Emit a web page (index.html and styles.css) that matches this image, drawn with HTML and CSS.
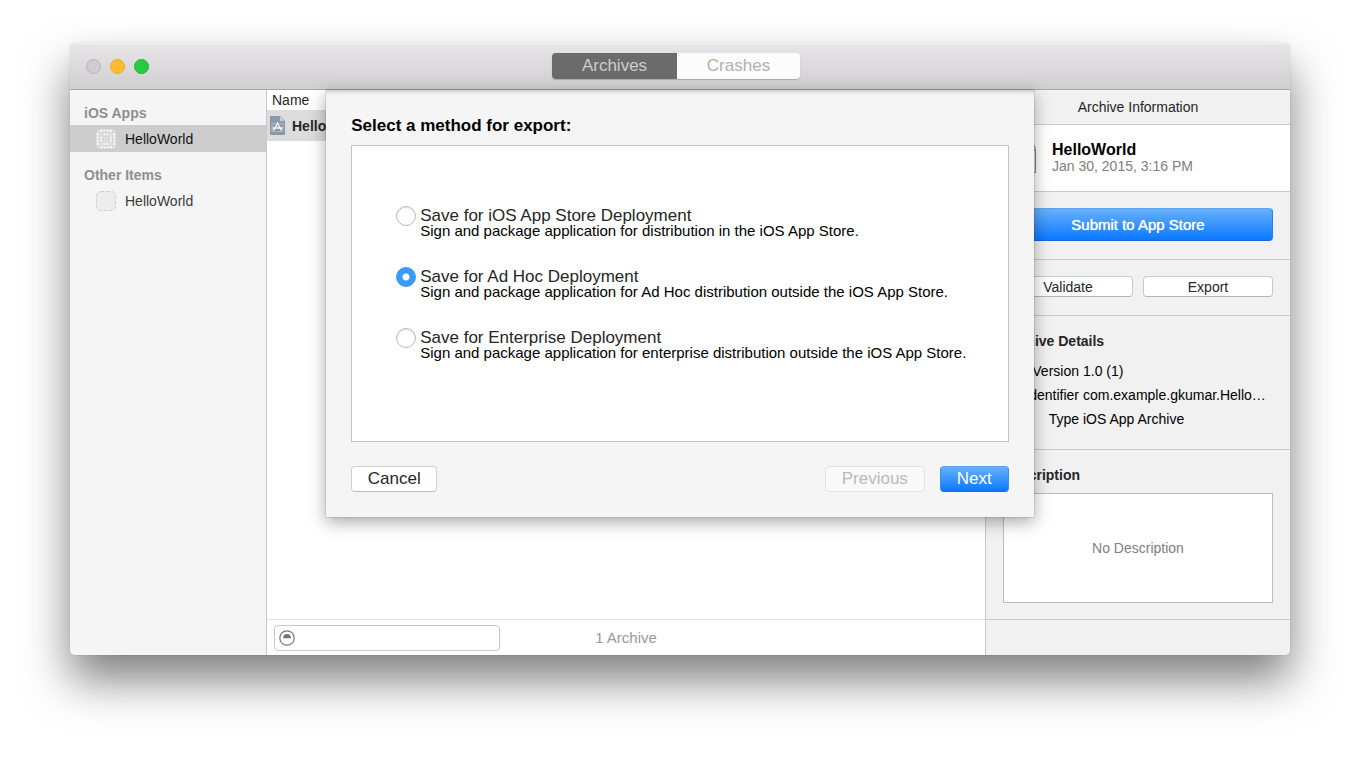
FILE: index.html
```html
<!DOCTYPE html>
<html lang="en">
<head>
<meta charset="utf-8">
<title>Archives</title>
<link rel="stylesheet" href="styles.css">
</head>
<body>
<div class="window">
  <header class="titlebar">
    <div class="lights">
      <button class="light light-close" aria-label="Close"></button>
      <button class="light light-minimize" aria-label="Minimize"></button>
      <button class="light light-zoom" aria-label="Zoom"></button>
    </div>
    <div class="segments">
      <button class="segment segment-active">Archives</button>
      <button class="segment">Crashes</button>
    </div>
  </header>

  <div class="content">
    <nav class="sidebar">
      <h2 class="group-title">iOS Apps</h2>
      <a class="app app-selected" href="#ios">
        <svg class="app-icon" viewBox="0 0 20 20" aria-hidden="true">
          <rect x="0.5" y="0.5" width="19" height="19" rx="4" fill="#f4f4f4" stroke="#e2e2e2"/>
          <g fill="none" stroke="#cacaca" stroke-width="0.6">
            <path d="M3.5 0v20M7 0v20M13 0v20M16.500 0v20M0 3.500h20M0 7h20M0 13h20M0 16.500h20M10 0v20M0 10h20M1 1l18 18M19 1L1 19"/>
            <circle cx="10" cy="10" r="3"/><circle cx="10" cy="10" r="7"/>
          </g>
        </svg>
        <span>HelloWorld</span>
      </a>
      <h2 class="group-title">Other Items</h2>
      <a class="app" href="#other">
        <svg class="app-icon" viewBox="0 0 20 20" aria-hidden="true">
          <rect x="0.5" y="0.5" width="19" height="19" rx="4" fill="#ededed" stroke="#d0d0d0" stroke-dasharray="4 1.5"/>
        </svg>
        <span>HelloWorld</span>
      </a>
    </nav>

    <main class="archives">
      <table class="archive-table">
        <thead><tr><th scope="col">Name</th></tr></thead>
        <tbody>
          <tr>
            <td>
              <div class="archive-name">
                <svg class="archive-icon" viewBox="0 0 15 19" aria-hidden="true">
                  <path d="M.5.5h9.500l4.500 4.500v13.500H.5z" fill="#8c9bab" stroke="#8797a6"/>
                  <path d="M10 .5V5h4.500z" fill="#d7dee5" stroke="#a4b0bb" stroke-width=".6"/>
                  <path d="M2 7.500h11v8H2z" fill="none" stroke="#b8c3cd" stroke-width=".7"/>
                  <path d="M3.500 14.500L8 6.500M7 6.500l4.500 8M2.500 12h10" fill="none" stroke="#f4f6f8" stroke-width="1.400"/>
                </svg>
                <span>HelloWorld</span>
              </div>
            </td>
          </tr>
        </tbody>
      </table>
      <footer class="archives-footer">
        <div class="filter">
          <svg class="filter-icon" viewBox="0 0 16 16" aria-hidden="true">
            <circle cx="8" cy="8" r="7.200" fill="#fff" stroke="#757575" stroke-width="1.200"/>
            <path d="M4 8.300C4 5.500 5.600 4 8 4s4 1.500 4 4.300z" fill="#757575"/>
          </svg>
          <input class="filter-input" type="text" aria-label="Filter archives">
        </div>
        <span class="count">1 Archive</span>
      </footer>
    </main>

    <aside class="inspector">
      <h2 class="inspector-title">Archive Information</h2>
      <section class="summary">
        <svg class="summary-icon" viewBox="0 0 33 36" aria-hidden="true">
          <path d="M.5.5h22q10 1 10 11v21H.5z" fill="#eef1f4" stroke="#75818c"/>
          <path d="M22.500.5v10h10" fill="none" stroke="#75818c"/>
        </svg>
        <div>
          <h3 class="summary-name">HelloWorld</h3>
          <p class="summary-date">Jan 30, 2015, 3:16 PM</p>
        </div>
      </section>
      <section class="submit-section">
        <button class="submit">Submit to App Store</button>
      </section>
      <section class="actions">
        <button class="action">Validate</button>
        <button class="action">Export</button>
      </section>
      <section class="details">
        <h3 class="section-title">Archive Details</h3>
        <dl class="facts">
          <dt>Version</dt><dd>1.0 (1)</dd>
          <dt>Identifier</dt><dd>com.example.gkumar.Hello…</dd>
          <dt>Type</dt><dd>iOS App Archive</dd>
        </dl>
      </section>
      <section class="description">
        <h3 class="section-title"><label for="description">Description</label></h3>
        <textarea class="description-box" id="description" placeholder="No Description"></textarea>
      </section>
      <div class="inspector-footer"></div>
    </aside>

    <form class="sheet" role="dialog" aria-labelledby="sheet-title">
      <h1 class="sheet-title" id="sheet-title">Select a method for export:</h1>
      <div class="options">
        <div class="option">
          <label class="option-label"><input class="radio" type="radio" name="method"><span>Save for iOS App Store Deployment</span></label>
          <p class="option-note">Sign and package application for distribution in the iOS App Store.</p>
        </div>
        <div class="option">
          <label class="option-label"><input class="radio" type="radio" name="method" checked><span>Save for Ad Hoc Deployment</span></label>
          <p class="option-note">Sign and package application for Ad Hoc distribution outside the iOS App Store.</p>
        </div>
        <div class="option">
          <label class="option-label"><input class="radio" type="radio" name="method"><span>Save for Enterprise Deployment</span></label>
          <p class="option-note">Sign and package application for enterprise distribution outside the iOS App Store.</p>
        </div>
      </div>
      <div class="sheet-buttons">
        <button class="sheet-button cancel" type="button">Cancel</button>
        <button class="sheet-button previous" type="button" disabled>Previous</button>
        <button class="sheet-button next" type="button">Next</button>
      </div>
    </form>
  </div>
</div>
</body>
</html>
```
FILE: styles.css
```css
* { box-sizing: border-box; }
body {
  margin: 0;
  min-height: 100vh;
  padding: 43px 70px 102px;
  display: flex;
  background: #fff;
  color: #262626;
  font: 14px/18px "Liberation Sans", Arial, sans-serif;
}
h1, h2, h3, p, dl, dd { margin: 0; }
button, input, textarea { font: inherit; color: inherit; margin: 0; }

.window {
  flex: 1;
  min-width: 0;
  display: flex;
  flex-direction: column;
  border-radius: 5px;
  overflow: clip;
  background: #fff;
  box-shadow: 0 0 1px rgba(0, 0, 0, .4), 0 25px 46px rgba(0, 0, 0, .5);
}

.titlebar {
  height: 47px;
  flex: none;
  display: grid;
  grid-template-columns: 1fr auto 1fr;
  align-items: center;
  padding: 0 24px 0 16px;
  background: linear-gradient(#e8e6e8, #d0ced0);
  border-bottom: 1px solid #a9a7a9;
  box-shadow: inset 0 1px #f5f4f5;
}
.lights { display: flex; gap: 9px; }
.light {
  width: 15px;
  height: 15px;
  padding: 0;
  border: 1px solid;
  border-radius: 50%;
}
.light-close { background: #cfcdcf; border-color: #b5b3b5; }
.light-minimize { background: #ffbd2e; border-color: #eba92a; }
.light-zoom { background: #28cb40; border-color: #1fb334; }
.segments {
  display: flex;
  border-radius: 4px;
  box-shadow: 0 1px 1px rgba(0, 0, 0, .2);
}
.segment {
  width: 123px;
  height: 26px;
  padding: 0;
  border: 0;
  border-radius: 0 4px 4px 0;
  background: #fcfcfc;
  color: #b0b0b0;
  font-size: 17px;
}
.segment-active {
  width: 125px;
  border-radius: 4px 0 0 4px;
  background: #6b6b6b;
  color: #cdcdcd;
}

.content { flex: 1; display: flex; position: relative; }

.sidebar {
  width: 197px;
  flex: none;
  padding-top: 14px;
  background: #f5f5f5;
  border-right: 1px solid #c8c8c8;
}
.group-title {
  padding: 0 14px;
  margin-bottom: 3px;
  color: #8f8f8f;
  font-size: 14px;
  line-height: 18px;
}
.app {
  height: 27px;
  display: flex;
  align-items: center;
  gap: 9px;
  padding-left: 26px;
  margin-bottom: 14px;
  color: #3b3b3b;
  text-decoration: none;
}
.app-selected { background: #cdcdcd; color: #111; }
.app-icon { width: 20px; height: 20px; }

.archives { flex: 1; min-width: 0; display: flex; flex-direction: column; }
.archive-table { width: 100%; border-collapse: collapse; }
.archive-table th {
  height: 20px;
  padding: 0 5px;
  text-align: left;
  font-weight: 400;
}
.archive-table td { height: 31px; padding: 0 3px; background: #dcdcdc; font-weight: 700; }
.archive-name { display: flex; align-items: center; gap: 7px; }
.archive-icon { width: 15px; height: 19px; }
.archives-footer {
  height: 36px;
  margin-top: auto;
  display: grid;
  grid-template-columns: 1fr auto 1fr;
  align-items: center;
  padding: 0 7px;
  border-top: 1px solid #e4e4e4;
}
.filter {
  max-width: 226px;
  height: 26px;
  display: flex;
  align-items: center;
  padding: 0 4px;
  border: 1px solid #c6c6c6;
  border-radius: 4px;
  background: #fff;
}
.filter-icon { width: 16px; height: 16px; flex: none; }
.filter-input { flex: 1; min-width: 0; border: 0; outline: 0; background: none; }
.count { color: #999; font-size: 15px; }

.inspector {
  width: 305px;
  flex: none;
  display: flex;
  flex-direction: column;
  background: #f1f1f1;
  border-left: 1px solid #c8c8c8;
}
.inspector-title, .inspector section { border-bottom: 1px solid #c8c8c8; }
.inspector-title {
  height: 35px;
  text-align: center;
  font-size: 14px;
  font-weight: 400;
  line-height: 34px;
}
.summary {
  height: 67px;
  display: flex;
  align-items: center;
  gap: 16px;
  padding-left: 17px;
  background: #fff;
}
.summary-icon { width: 33px; height: 36px; }
.summary-name { color: #000; font-size: 16px; line-height: 17px; }
.summary-date { color: #808080; line-height: 17px; }
.submit-section { padding: 16px 17px 18px; }
.submit {
  display: block;
  width: 100%;
  height: 33px;
  border: 1px solid;
  border-color: #5aa5ee #2a7fee #1767e0;
  border-radius: 4px;
  background: linear-gradient(#68b0fb, #0a79ff);
  color: #fff;
  font-size: 15px;
  text-shadow: 0 0 1px #fff;
}
.actions { display: flex; gap: 10px; padding: 16px 17px 18px; }
.action {
  flex: 1;
  height: 21px;
  padding: 0;
  border: 1px solid #c9c9c9;
  border-bottom-color: #b5b5b5;
  border-radius: 4px;
  background: #fff;
}
.details { padding: 16px 17px 18px; color: #000; }
.section-title { color: #262626; font-size: 14px; line-height: 18px; }
.facts {
  display: grid;
  grid-template-columns: 76px 1fr;
  column-gap: 4px;
  margin-top: 9px;
  line-height: 24px;
}
.facts dt { text-align: right; }
.facts dd { white-space: nowrap; }
.description {
  flex: 1;
  display: flex;
  flex-direction: column;
  padding: 16px 17px;
}
.description-box {
  flex: 1;
  width: 100%;
  min-height: 110px;
  margin-top: 9px;
  padding: 45px 8px 0;
  border: 1px solid #bdbdbd;
  border-radius: 0;
  background: #fff;
  text-align: center;
  resize: none;
}
.description-box::placeholder { color: #808080; opacity: 1; }
.inspector-footer { height: 35px; flex: none; }

/* Modal sheet hanging from the title bar */
.sheet {
  position: absolute;
  top: 0;
  left: 0;
  right: 0;
  width: 58%;
  margin: 0 auto;
  padding: 26px 25px 25px;
  background: #f5f5f5;
  box-shadow: inset 0 5px 5px -4px rgba(0, 0, 0, .25), 0 0 1px rgba(0, 0, 0, .5), 0 5px 16px rgba(0, 0, 0, .35);
}
.sheet-title { color: #000; font-size: 17px; line-height: 20px; }
.options {
  display: flex;
  flex-direction: column;
  gap: 30px;
  min-height: 297px;
  margin-top: 9px;
  padding: 61px 20px 61px 44px;
  border: 1px solid #c4c4c4;
  background: #fff;
}
.option-label {
  height: 17px;
  display: flex;
  align-items: center;
  gap: 4px;
  font-size: 17px;
}
.radio {
  appearance: none;
  width: 20px;
  height: 20px;
  flex: none;
  border: 1px solid #b8b8b8;
  border-radius: 50%;
  background: #fff;
  box-shadow: inset 0 1px 1px rgba(0, 0, 0, .12);
}
.radio:checked {
  border-color: #3b99fc;
  background: radial-gradient(circle, #fff 3px, #3b99fc 4px);
  box-shadow: none;
}
.option-note { padding-left: 24px; color: #000; font-size: 15px; line-height: 14px; }
.sheet-buttons { display: flex; gap: 15px; margin-top: 24px; }
.sheet-button {
  height: 26px;
  padding: 0;
  border: 1px solid #d0d0d0;
  border-bottom-color: #bdbdbd;
  border-radius: 4px;
  background: #fff;
  font-size: 17px;
}
.cancel { width: 86px; margin-right: auto; }
.previous { width: 100px; background: #f9f9f9; border-color: #e2e2e2; color: #b9b9b9; }
.next {
  width: 69px;
  border-color: #5aa5ee #3b8df0 #1670ea;
  background: linear-gradient(#68b0fb, #0a79ff);
  color: #fff;
}
```
